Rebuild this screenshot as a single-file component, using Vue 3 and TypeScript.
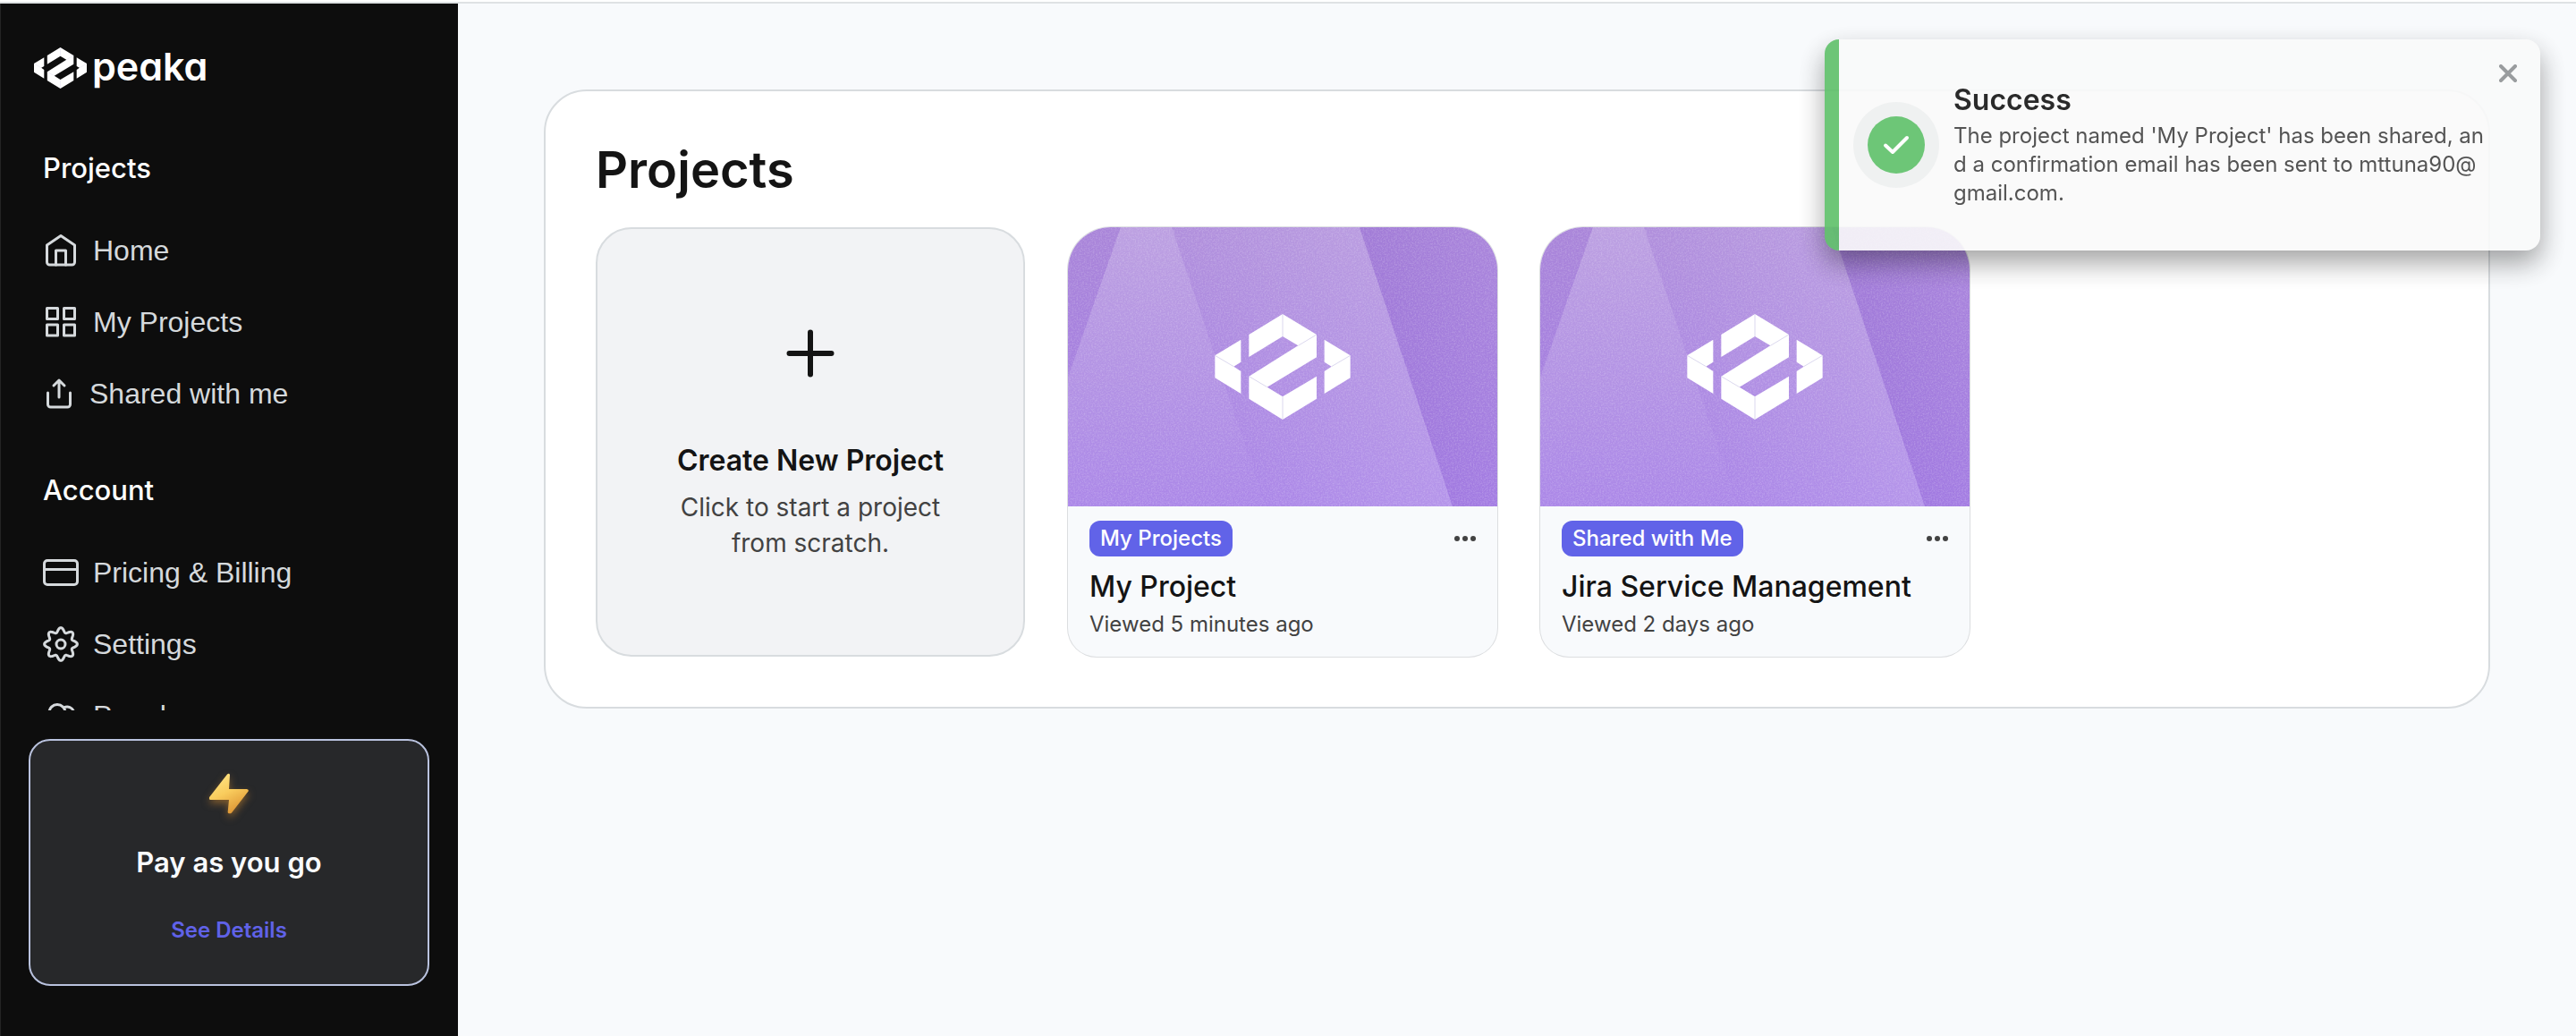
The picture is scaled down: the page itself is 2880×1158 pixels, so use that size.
<script setup lang="ts">
import { ref } from 'vue'

interface NavItem {
  label: string
  icon: 'home' | 'grid' | 'share' | 'card' | 'gear' | 'people'
}

interface NavSection {
  title: string
  items: NavItem[]
}

interface Project {
  badge: string
  name: string
  viewed: string
}

const sections: NavSection[] = [
  {
    title: 'Projects',
    items: [
      { label: 'Home', icon: 'home' },
      { label: 'My Projects', icon: 'grid' },
      { label: 'Shared with me', icon: 'share' },
    ],
  },
  {
    title: 'Account',
    items: [
      { label: 'Pricing & Billing', icon: 'card' },
      { label: 'Settings', icon: 'gear' },
      { label: 'People', icon: 'people' },
    ],
  },
]

const projects: Project[] = [
  { badge: 'My Projects', name: 'My Project', viewed: 'Viewed 5 minutes ago' },
  { badge: 'Shared with Me', name: 'Jira Service Management', viewed: 'Viewed 2 days ago' },
]

const toastOpen = ref(true)

// Eight-lobed outline of the settings icon, in a 40 unit box.
const gearPath = ((): string => {
  const points: string[] = []
  for (let i = 0; i <= 160; i++) {
    const a = (i / 160) * Math.PI * 2
    const r = 15.9 + 2.5 * Math.cos(8 * a)
    points.push(`${(20 + r * Math.sin(a)).toFixed(2)} ${(20 - r * Math.cos(a)).toFixed(2)}`)
  }
  return `M${points.join('L')}Z`
})()
</script>

<template>
  <div class="page">
    <svg class="defs" width="0" height="0" aria-hidden="true">
      <symbol id="mark" viewBox="534 336 454 354">
        <path fill="#fff" d="M534 475 621 422V497L597 512 621 528V603L534 550ZM648 405 761 336 875 405V481L709 581 761 613 875 545V620L761 690 648 620V545L813 442 761 411 648 480ZM988 475 901 422V497L925 512 901 528V603L988 550Z" />
        <path fill="none" stroke="#c9c4e6" stroke-width="2" d="M761 336V411M875 405 813 442M648 545 709 581M761 613V690M534 475 597 512M988 475 925 512" />
      </symbol>
    </svg>

    <aside class="sidebar">
      <a class="brand" href="#" aria-label="peaka">
        <svg class="brand-mark"><use href="#mark" /></svg>
        <span class="brand-name">peaka</span>
      </a>

      <nav class="nav">
        <section v-for="section in sections" :key="section.title" class="nav-section">
          <h2 class="nav-title">{{ section.title }}</h2>
          <a v-for="item in section.items" :key="item.label" class="nav-item" href="#">
            <svg v-if="item.icon === 'home'" class="icon" viewBox="0 0 40 40">
              <path d="M20 3.500 4.500 14V33a3 3 0 0 0 3 3h25a3 3 0 0 0 3-3V14Z" />
              <path d="M14.500 36V20h11v16" />
            </svg>
            <svg v-else-if="item.icon === 'grid'" class="icon" viewBox="0 0 40 40">
              <path d="M4.500 4.500h12v12h-12ZM23.500 4.500h12v12h-12ZM4.500 23h12v12h-12ZM23.500 23h12v12h-12Z" />
            </svg>
            <svg v-else-if="item.icon === 'share'" class="icon icon-share" viewBox="0 0 36 40">
              <path d="M18 24V5M12 11l6-6 6 6M5.500 19v13a3 3 0 0 0 3 3h19a3 3 0 0 0 3-3V19" />
            </svg>
            <svg v-else-if="item.icon === 'card'" class="icon" viewBox="0 0 40 40">
              <rect x="1.500" y="6.500" width="37" height="27" rx="3.500" />
              <path d="M1.500 16.500h37" />
            </svg>
            <svg v-else-if="item.icon === 'gear'" class="icon" viewBox="0 0 40 40">
              <path :d="gearPath" />
              <circle cx="20" cy="20" r="5" />
            </svg>
            <svg v-else class="icon" viewBox="0 0 40 40">
              <circle cx="16" cy="16.500" r="9" />
              <path d="M23.500 11a7.500 7.500 0 1 1 4 14M3 38c3-8 8-11 13-11s10 3 13 11" />
            </svg>
            <span>{{ item.label }}</span>
          </a>
        </section>
      </nav>

      <div class="plan">
        <svg class="bolt" viewBox="0 0 60 60" aria-hidden="true">
          <defs>
            <linearGradient id="bolt-fill" x1="0" y1="0" x2="0.500" y2="1">
              <stop offset="0" stop-color="#ffe98c" />
              <stop offset="0.550" stop-color="#f9cc5d" />
              <stop offset="1" stop-color="#e09a38" />
            </linearGradient>
          </defs>
          <path fill="url(#bolt-fill)" d="M28 5.500c1.300-1.500 3.100-1 3 1L30 22h19.500c2 0 3 1.500 1.700 3L33 48.500c-1.500 1.500-4.500 1-4.300-1L30 34H9.500C8 34 7.300 32 8.500 30.500Z" />
        </svg>
        <h3 class="plan-name">Pay as you go</h3>
        <a class="plan-link" href="#">See Details</a>
      </div>
    </aside>

    <main class="main">
      <section class="panel">
        <h1 class="panel-title">Projects</h1>
        <div class="cards">
          <button class="create" type="button">
            <svg class="plus" viewBox="0 0 60 60" aria-hidden="true">
              <path d="M30 6.500v47M6.500 30h47" />
            </svg>
            <span class="create-title">Create New Project</span>
            <span class="create-text">Click to start a project from scratch.</span>
          </button>

          <article v-for="project in projects" :key="project.name" class="card">
            <div class="cover">
              <svg class="beams" viewBox="0 0 480 312" preserveAspectRatio="none" aria-hidden="true">
                <defs>
                  <linearGradient id="base" x1="0" y1="0" x2="0" y2="1">
                    <stop offset="0" stop-color="#a985d9" />
                    <stop offset="1" stop-color="#a47de6" />
                  </linearGradient>
                  <linearGradient id="beam-left" x1="0" y1="0" x2="0" y2="1">
                    <stop offset="0" stop-color="#fff" stop-opacity="0.220" />
                    <stop offset="1" stop-color="#fff" stop-opacity="0.080" />
                  </linearGradient>
                  <linearGradient id="beam-mid" x1="0" y1="0.350" x2="1" y2="0">
                    <stop offset="0" stop-color="#fff" stop-opacity="0.060" />
                    <stop offset="1" stop-color="#fff" stop-opacity="0.240" />
                  </linearGradient>
                  <linearGradient id="beam-right" x1="0" y1="0.350" x2="1" y2="0">
                    <stop offset="0" stop-color="#8f64d0" stop-opacity="0.350" />
                    <stop offset="1" stop-color="#ab87e0" stop-opacity="0.300" />
                  </linearGradient>
                  <filter id="grain" x="0" y="0" width="1" height="1">
                    <feTurbulence type="fractalNoise" baseFrequency="0.600" numOctaves="2" seed="4" />
                    <feColorMatrix values="0 0 0 0 1  0 0 0 0 1  0 0 0 0 1  0.700 0 0 0 -0.270" />
                  </filter>
                </defs>
                <rect width="480" height="312" fill="url(#base)" />
                <path fill="url(#beam-left)" d="M59 0H116L221 312H0V168Z" />
                <path fill="url(#beam-mid)" d="M116 0H326L430 312H221Z" />
                <path fill="url(#beam-right)" d="M326 0H480V312H430Z" />
                <rect width="480" height="312" filter="url(#grain)" opacity="0.600" />
              </svg>
              <svg class="cover-mark" aria-hidden="true"><use href="#mark" /></svg>
            </div>
            <div class="card-body">
              <div class="card-top">
                <span class="badge">{{ project.badge }}</span>
                <button class="more" type="button" aria-label="More options">
                  <svg viewBox="0 0 24 6"><circle cx="3" cy="3" r="3" /><circle cx="12" cy="3" r="3" /><circle cx="21" cy="3" r="3" /></svg>
                </button>
              </div>
              <h2 class="card-title">{{ project.name }}</h2>
              <p class="card-meta">{{ project.viewed }}</p>
            </div>
          </article>
        </div>
      </section>
    </main>

    <div v-if="toastOpen" class="toast" role="status">
      <span class="toast-icon">
        <svg viewBox="0 0 64 64" aria-hidden="true">
          <circle cx="32" cy="32" r="32" fill="#5ec069" />
          <path fill="none" stroke="#fff" stroke-width="4" stroke-linecap="round" stroke-linejoin="round" d="M20 32.500 28 40 44 24" />
        </svg>
      </span>
      <div class="toast-body">
        <strong class="toast-title">Success</strong>
        <p class="toast-text">The project named 'My Project' has been shared, and a confirmation email has been sent to mttuna90@gmail.com.</p>
      </div>
      <button class="toast-close" type="button" aria-label="Close" @click="toastOpen = false">
        <svg viewBox="0 0 20 20"><path d="M2 2 18 18M18 2 2 18" /></svg>
      </button>
    </div>
  </div>
</template>

<style>
body {
  margin: 0;
  background: #f8fafc;
}
</style>

<style scoped>
.page {
  box-sizing: border-box;
  position: relative;
  display: flex;
  height: 100vh;
  padding-top: 4px;
  background: linear-gradient(#fff 2px, #dfe2e4 2px, #dfe2e4 4px, #f8fafc 4px);
  font-family: Inter, "Liberation Sans", sans-serif;
  color: #141414;
}

h1, h2, h3, p {
  margin: 0;
}

a {
  text-decoration: none;
}

button {
  font: inherit;
  color: inherit;
  cursor: pointer;
}

.defs {
  position: absolute;
}

.sidebar {
  box-sizing: border-box;
  display: flex;
  flex: none;
  flex-direction: column;
  width: 512px;
  padding: 48px 32px 56px 31px;
  border-left: 1px solid #242424;
  background: #0d0d0d;
}

.brand {
  display: flex;
  align-items: center;
  gap: 6px;
  height: 48px;
  padding-left: 6px;
  color: #fff;
}

.brand-mark {
  width: 59px;
  height: 46px;
}

.brand-name {
  padding-bottom: 4px;
  font-size: 43px;
  font-weight: 600;
  line-height: 48px;
  font-feature-settings: "cv11";
}

.nav {
  display: flex;
  flex: 1;
  flex-direction: column;
  gap: 48px;
  min-height: 0;
  margin-top: 68px;
  padding-left: 16px;
  overflow: hidden;
}

.nav-title {
  margin-bottom: 32px;
  color: #fff;
  font-size: 31px;
  font-weight: 500;
  line-height: 40px;
}

.nav-item {
  display: flex;
  align-items: center;
  gap: 16px;
  height: 80px;
  color: #d5d9dc;
  font-family: "Liberation Sans", Arial, sans-serif;
  font-size: 32px;
}

.icon {
  width: 40px;
  height: 40px;
  fill: none;
  stroke: currentColor;
  stroke-width: 3;
  stroke-linecap: round;
  stroke-linejoin: round;
}

.icon-share {
  width: 36px;
}

.plan {
  box-sizing: border-box;
  display: flex;
  flex-direction: column;
  align-items: center;
  margin-top: 32px;
  height: 276px;
  padding-top: 32px;
  border: 2px solid #b9c2de;
  border-radius: 24px;
  background: #27282a;
}

.bolt {
  width: 60px;
  height: 60px;
  filter: drop-shadow(0 4px 4px #d9902f80);
}

.plan-name {
  margin-top: 24px;
  color: #f8fafc;
  font-size: 31px;
  font-weight: 600;
  line-height: 40px;
}

.plan-link {
  margin-top: 40px;
  color: #6062e8;
  font-size: 24px;
  font-weight: 600;
  line-height: 32px;
}

.main {
  flex: 1;
  min-width: 0;
  padding: 96px;
}

.panel {
  padding: 56px;
  border: 2px solid #d8dcdf;
  border-radius: 48px;
  background: #fff;
}

.panel-title {
  margin-bottom: 32px;
  font-size: 56px;
  font-weight: 600;
  line-height: 64px;
}

.cards {
  display: flex;
  flex-wrap: wrap;
  gap: 48px;
}

.create {
  box-sizing: border-box;
  display: flex;
  flex-direction: column;
  align-items: center;
  justify-content: center;
  width: 480px;
  height: 480px;
  padding: 4px 80px 0;
  border: 2px solid #d8dcdf;
  border-radius: 40px;
  background: #f2f3f5;
}

.plus {
  width: 60px;
  height: 60px;
  fill: none;
  stroke: #141414;
  stroke-width: 6;
  stroke-linecap: round;
}

.create-title {
  margin-top: 70px;
  font-size: 32px;
  font-weight: 600;
  line-height: 40px;
}

.create-text {
  margin-top: 12px;
  color: #424242;
  font-size: 28px;
  line-height: 40px;
}

.card {
  width: 480px;
  height: 480px;
  overflow: hidden;
  border-radius: 48px 48px 32px 32px;
  background: #f8fafc;
  box-shadow: 0 0 0 1px #dcdee0;
}

.cover {
  display: grid;
  place-items: center;
  height: 312px;
}

.cover > * {
  grid-area: 1 / 1;
}

.beams {
  display: block;
  width: 100%;
  height: 312px;
}

.cover-mark {
  z-index: 1;
  width: 152px;
  height: 118px;
}

.card-body {
  padding: 16px 24px;
}

.card-top {
  display: flex;
  align-items: center;
  justify-content: space-between;
}

.badge {
  padding: 4px 12px;
  border-radius: 12px;
  background: #6163e8;
  color: #fff;
  font-size: 24px;
  font-weight: 500;
  line-height: 32px;
}

.more {
  display: flex;
  padding: 8px 0;
  border: 0;
  background: none;
}

.more svg {
  width: 24px;
  height: 6px;
  fill: #424242;
}

.card-title {
  margin-top: 14px;
  font-size: 32px;
  font-weight: 500;
  line-height: 40px;
}

.card-meta {
  margin-top: 6px;
  color: #424242;
  font-size: 24px;
  line-height: 32px;
}

.toast {
  position: absolute;
  top: 44px;
  right: 40px;
  box-sizing: border-box;
  display: flex;
  align-items: center;
  gap: 16px;
  width: 800px;
  min-height: 236px;
  padding: 40px 24px 40px 16px;
  border-left: 16px solid #5ec069;
  border-radius: 16px;
  background: #fafafa;
  box-shadow: 0 14px 30px #00000066;
  opacity: 0.9;
}

.toast-icon {
  display: flex;
  flex: none;
  padding: 16px;
  border-radius: 50%;
  background: #eef0f0;
}

.toast-icon svg {
  width: 64px;
  height: 64px;
}

.toast-body {
  width: 596px;
  padding-bottom: 4px;
}

.toast-title {
  display: block;
  font-size: 32px;
  font-weight: 600;
  line-height: 48px;
}

.toast-text {
  color: #424242;
  font-size: 24px;
  line-height: 32px;
  word-break: break-all;
}

.toast-close {
  position: absolute;
  top: 20px;
  right: 18px;
  display: flex;
  padding: 8px;
  border: 0;
  background: none;
}

.toast-close svg {
  width: 20px;
  height: 20px;
  fill: none;
  stroke: #8f9294;
  stroke-width: 4;
  stroke-linecap: round;
}
</style>
